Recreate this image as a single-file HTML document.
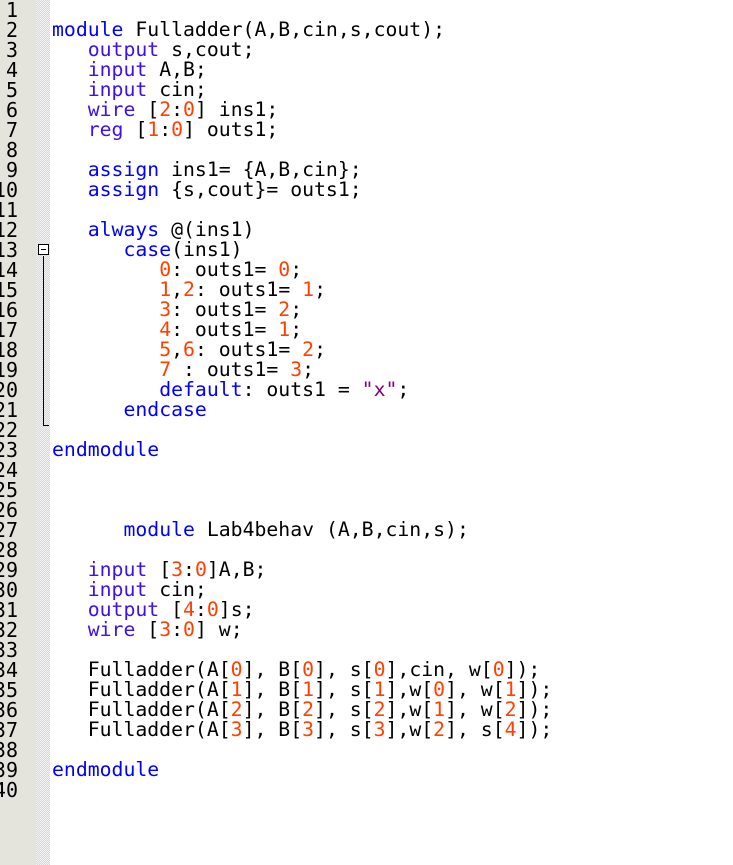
<!DOCTYPE html>
<html><head><style>
html,body{margin:0;padding:0;width:733px;height:865px;overflow:hidden;background:#fff}
#g{position:absolute;left:0;top:0;width:36px;height:865px;background:#e4e4dc;overflow:hidden}
#h{position:absolute;left:36px;top:0;width:14px;height:865px;background:repeating-conic-gradient(#d8d8d8 0 25%,#f2f2f2 0 50%) 0 0/2px 2px}
.n{position:absolute;left:-40px;width:58px;top:0;font:20px/20px "DejaVu Sans Mono","Liberation Mono",monospace;color:#000;text-align:right;white-space:pre}
pre{position:absolute;left:52px;top:0;margin:0;font:19.8px/20px "DejaVu Sans Mono","Liberation Mono",monospace;color:#000}
.k{color:#0000ff}.p{color:#4010f0}.o{color:#ff4000}.s{color:#800080}
</style></head><body>
<div id="g"><div class="n">1
2
3
4
5
6
7
8
9
10
11
12
13
14
15
16
17
18
19
20
21
22
23
24
25
26
27
28
29
30
31
32
33
34
35
36
37
38
39
40</div></div>
<div id="h"></div>
<div style="position:absolute;left:38px;top:244px;width:9px;height:9px;border:1px solid #000;background:#fff"><div style="position:absolute;left:2px;top:4px;width:5px;height:1px;background:#000"></div></div>
<div style="position:absolute;left:43px;top:256px;width:1px;height:170px;background:#000"></div>
<div style="position:absolute;left:43px;top:425px;width:6px;height:1px;background:#000"></div>
<pre>

<span class="k">module</span> Fulladder(A,B,cin,s,cout);
   <span class="p">output</span> s,cout;
   <span class="p">input</span> A,B;
   <span class="p">input</span> cin;
   <span class="p">wire</span> [<span class="o">2</span>:<span class="o">0</span>] ins1;
   <span class="p">reg</span> [<span class="o">1</span>:<span class="o">0</span>] outs1;

   <span class="k">assign</span> ins1= {A,B,cin};
   <span class="k">assign</span> {s,cout}= outs1;

   <span class="k">always</span> @(ins1)
      <span class="k">case</span>(ins1)
         <span class="o">0</span>: outs1= <span class="o">0</span>;
         <span class="o">1</span>,<span class="o">2</span>: outs1= <span class="o">1</span>;
         <span class="o">3</span>: outs1= <span class="o">2</span>;
         <span class="o">4</span>: outs1= <span class="o">1</span>;
         <span class="o">5</span>,<span class="o">6</span>: outs1= <span class="o">2</span>;
         <span class="o">7</span> : outs1= <span class="o">3</span>;
         <span class="k">default</span>: outs1 = <span class="s">"x"</span>;
      <span class="k">endcase</span>

<span class="k">endmodule</span>



      <span class="k">module</span> Lab4behav (A,B,cin,s);

   <span class="p">input</span> [<span class="o">3</span>:<span class="o">0</span>]A,B;
   <span class="p">input</span> cin;
   <span class="p">output</span> [<span class="o">4</span>:<span class="o">0</span>]s;
   <span class="p">wire</span> [<span class="o">3</span>:<span class="o">0</span>] w;

   Fulladder(A[<span class="o">0</span>], B[<span class="o">0</span>], s[<span class="o">0</span>],cin, w[<span class="o">0</span>]);
   Fulladder(A[<span class="o">1</span>], B[<span class="o">1</span>], s[<span class="o">1</span>],w[<span class="o">0</span>], w[<span class="o">1</span>]);
   Fulladder(A[<span class="o">2</span>], B[<span class="o">2</span>], s[<span class="o">2</span>],w[<span class="o">1</span>], w[<span class="o">2</span>]);
   Fulladder(A[<span class="o">3</span>], B[<span class="o">3</span>], s[<span class="o">3</span>],w[<span class="o">2</span>], s[<span class="o">4</span>]);

<span class="k">endmodule</span>
</pre>
</body></html>
